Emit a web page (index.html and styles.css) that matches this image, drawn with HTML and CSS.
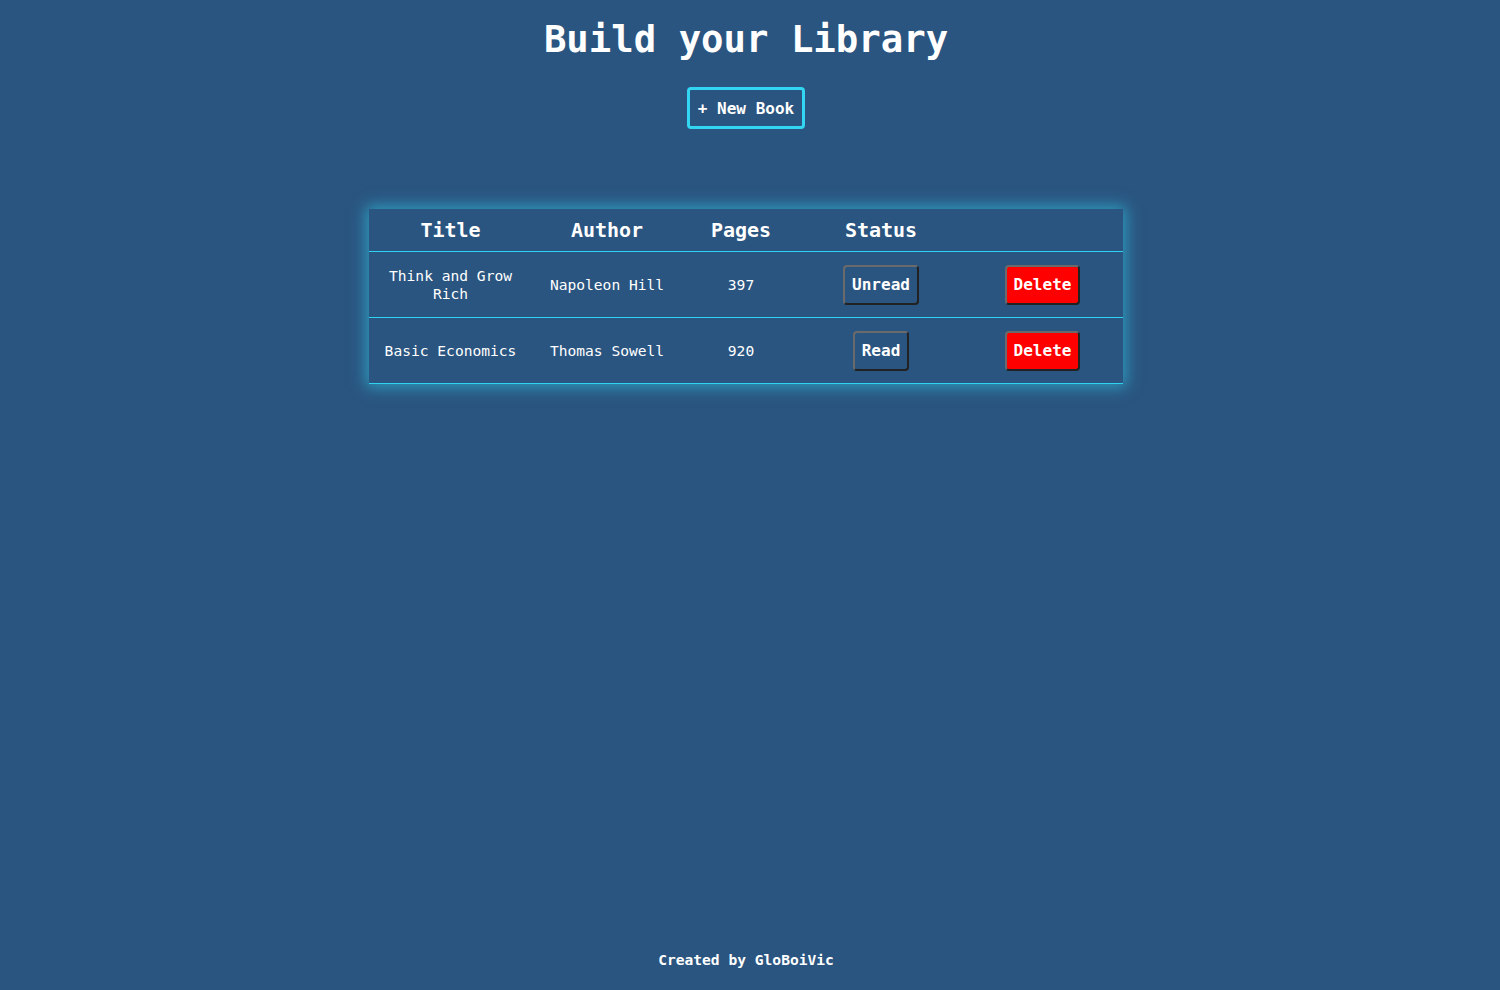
FILE: index.html
```html
<!DOCTYPE html>
<html lang="en">
<head>
<meta charset="utf-8">
<title>Library</title>
<link rel="stylesheet" href="styles.css">
</head>
<body>
<div class="page">
  <h1 class="heading">Build your Library</h1>
  <button class="new-btn">+ New Book</button>
  <table class="books">
    <thead>
      <tr>
        <th class="c-title">Title</th>
        <th class="c-author">Author</th>
        <th class="c-pages">Pages</th>
        <th class="c-status">Status</th>
        <th class="c-action"></th>
      </tr>
    </thead>
    <tbody>
      <tr>
        <td>Think and Grow Rich</td>
        <td>Napoleon Hill</td>
        <td>397</td>
        <td><button class="status-btn">Unread</button></td>
        <td><button class="status-btn delete">Delete</button></td>
      </tr>
      <tr>
        <td>Basic Economics</td>
        <td>Thomas Sowell</td>
        <td>920</td>
        <td><button class="status-btn">Read</button></td>
        <td><button class="status-btn delete">Delete</button></td>
      </tr>
    </tbody>
  </table>
  <footer class="footer">Created by GloBoiVic</footer>
</div>
</body>
</html>
```
FILE: styles.css
```css
html, body {
  margin: 0;
  padding: 0;
  background: #2a5580;
}
.page {
  min-height: 100vh;
  box-sizing: border-box;
  padding-right: 8px;
  display: flex;
  flex-direction: column;
  align-items: center;
  color: #ffffff;
  font-family: "DejaVu Sans Mono", "Liberation Mono", monospace;
}
.heading {
  margin: 18px 0 0 0;
  font-size: 37.3px;
  line-height: 43px;
  font-weight: bold;
}
.new-btn {
  margin-top: 26px;
  background: #2a5580;
  color: #ffffff;
  border: 3px solid #33d6f2;
  border-radius: 4px;
  font-family: inherit;
  font-size: 16px;
  font-weight: bold;
  line-height: 19px;
  white-space: nowrap;
  padding: 9px 8px 8px;
  height: 42px;
}
.books {
  margin-top: 80px;
  width: 754px;
  border-collapse: collapse;
  box-shadow: 0 0 14px 3px rgba(51, 214, 242, 0.55);
  background: #2a5580;
}
.books th {
  font-size: 20px;
  font-weight: bold;
  height: 42px;
  padding: 0;
  border-bottom: 1px solid #2fd3f2;
  text-align: center;
}
.books td {
  font-size: 14.6px;
  line-height: 18px;
  height: 64px;
  padding: 1px 14px 0;
  text-align: center;
  border-bottom: 1px solid #2fd3f2;
}
.c-title { width: 163px; }
.c-author { width: 150px; }
.c-pages { width: 118px; }
.c-status { width: 162px; }
.c-action { width: 161px; }
.status-btn {
  background: #2a5580;
  color: #ffffff;
  font-family: inherit;
  font-size: 16px;
  font-weight: bold;
  line-height: 19px;
  padding: 8px 7px 9px;
  border-radius: 4px;
  border: 2px solid;
  border-color: #6a6a6a #222222 #222222 #6a6a6a;
}
.status-btn.delete {
  background: #ff0000;
}
.footer {
  margin-top: auto;
  margin-bottom: 20px;
  font-size: 14.6px;
  font-weight: bold;
  line-height: 20px;
}
```
